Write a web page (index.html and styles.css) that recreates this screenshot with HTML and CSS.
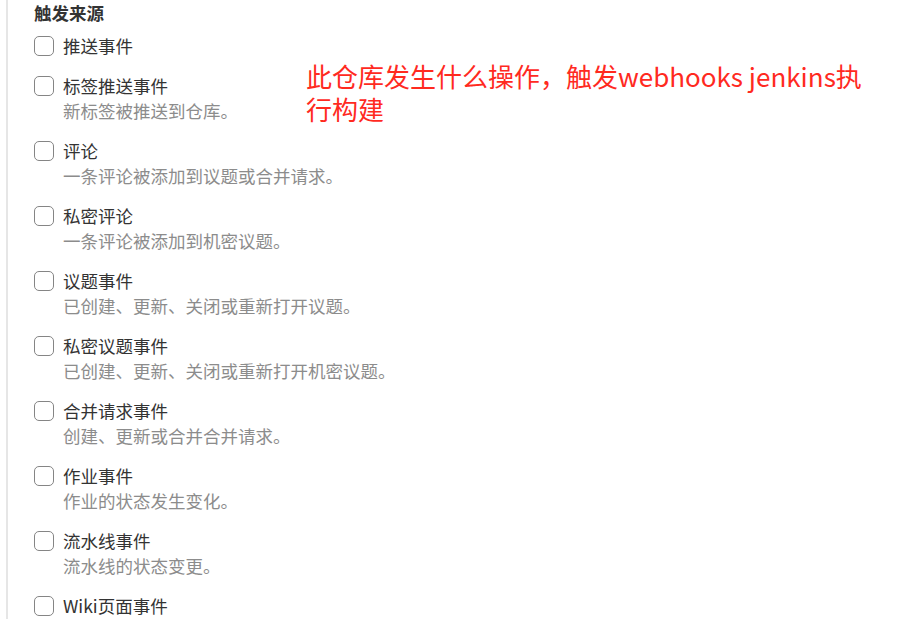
FILE: index.html
```html
<!DOCTYPE html>
<html lang="zh-CN">
<head>
<meta charset="utf-8">
<title>触发来源</title>
<link rel="stylesheet" href="styles.css">
</head>
<body>
<div class="page">
  <section class="panel">
    <h3 class="title">触发来源</h3>
    <ul class="events">
      <li class="event"><span class="box"></span><div class="text"><div class="label">推送事件</div></div></li>
      <li class="event"><span class="box"></span><div class="text"><div class="label">标签推送事件</div><div class="desc">新标签被推送到仓库。</div></div></li>
      <li class="event"><span class="box"></span><div class="text"><div class="label">评论</div><div class="desc">一条评论被添加到议题或合并请求。</div></div></li>
      <li class="event"><span class="box"></span><div class="text"><div class="label">私密评论</div><div class="desc">一条评论被添加到机密议题。</div></div></li>
      <li class="event"><span class="box"></span><div class="text"><div class="label">议题事件</div><div class="desc">已创建、更新、关闭或重新打开议题。</div></div></li>
      <li class="event"><span class="box"></span><div class="text"><div class="label">私密议题事件</div><div class="desc">已创建、更新、关闭或重新打开机密议题。</div></div></li>
      <li class="event"><span class="box"></span><div class="text"><div class="label">合并请求事件</div><div class="desc">创建、更新或合并合并请求。</div></div></li>
      <li class="event"><span class="box"></span><div class="text"><div class="label">作业事件</div><div class="desc">作业的状态发生变化。</div></div></li>
      <li class="event"><span class="box"></span><div class="text"><div class="label">流水线事件</div><div class="desc">流水线的状态变更。</div></div></li>
      <li class="event"><span class="box"></span><div class="text"><div class="label">Wiki页面事件</div><div class="desc">Wiki页面被创建或更新。</div></div></li>
    </ul>
  </section>
  <div class="note">此仓库发生什么操作，触发webhooks jenkins执<br>行构建</div>
</div>
</body>
</html>
```

FILE: styles.css
```css
html, body {
  margin: 0;
  padding: 0;
  background: #ffffff;
  overflow: hidden;
}
body {
  font-family: "Noto Sans CJK SC", "Noto Sans", sans-serif;
  color: #333333;
  width: 899px;
  height: 619px;
}
.page {
  position: relative;
  height: 619px;
  padding-left: 6px;
}
.panel {
  border-left: 2px solid #e6e6e6;
  height: 619px;
  padding-left: 26px;
  box-sizing: border-box;
}
.title {
  margin: 0;
  padding-top: 1px;
  font-size: 17.5px;
  line-height: 24px;
  font-weight: 700;
  color: #333333;
}
.events {
  list-style: none;
  margin: 9px 0 0 0;
  padding: 0;
  display: flex;
  flex-direction: column;
  align-items: flex-start;
  gap: 16px;
}
.event {
  display: flex;
  align-items: flex-start;
}
.box {
  flex: none;
  box-sizing: border-box;
  width: 20px;
  height: 20px;
  margin-top: 2px;
  border: 1.5px solid #858585;
  border-radius: 5px;
  background: #ffffff;
}
.text {
  margin-left: 9px;
}
.label {
  font-size: 17.5px;
  line-height: 24px;
  color: #333333;
}
.desc {
  font-size: 17.5px;
  line-height: 25px;
  color: #8c8c8c;
}
.note {
  position: absolute;
  left: 306px;
  top: 59px;
  font-size: 26px;
  line-height: 33px;
  color: #ff2a1f;
  white-space: nowrap;
}
```
